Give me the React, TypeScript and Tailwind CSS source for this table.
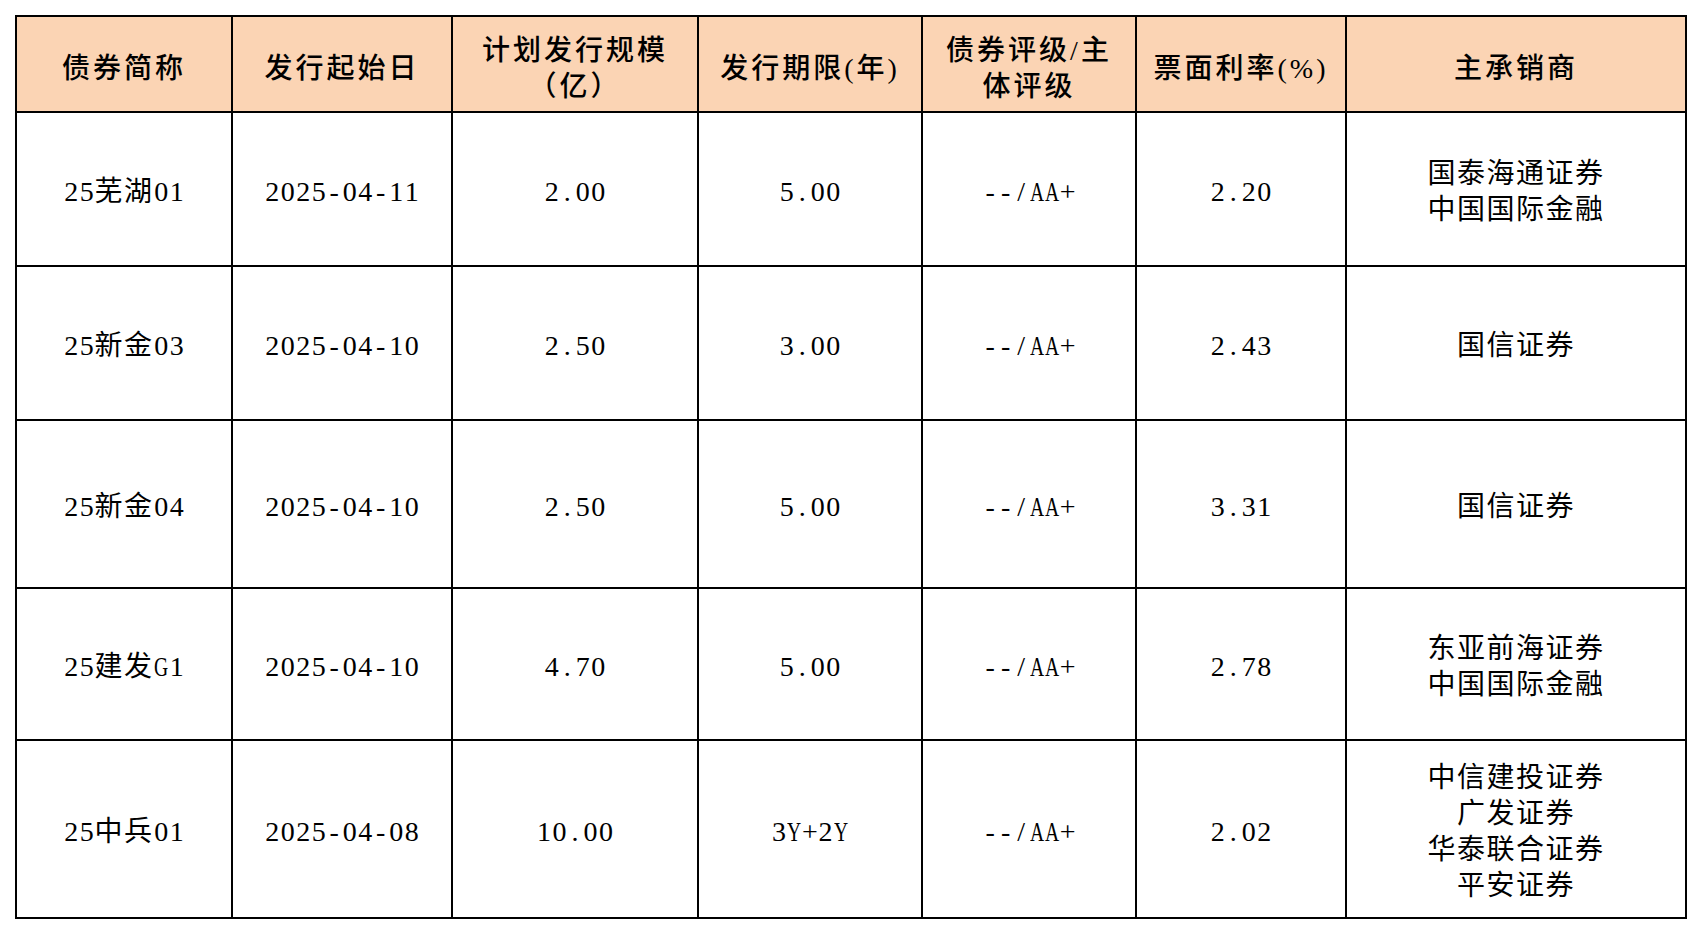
import React from 'react';

type Bond = {
  name: string;
  date: string;
  size: string;
  term: string;
  rating: string;
  coupon: string;
  underwriters: string[];
  height: string;
};

const bonds: Bond[] = [
  { name: '25芜湖01', date: '2025-04-11', size: '2.00', term: '5.00', rating: '--/AA+', coupon: '2.20', underwriters: ['国泰海通证券', '中国国际金融'], height: 'h-[154px]' },
  { name: '25新金03', date: '2025-04-10', size: '2.50', term: '3.00', rating: '--/AA+', coupon: '2.43', underwriters: ['国信证券'], height: 'h-[154px]' },
  { name: '25新金04', date: '2025-04-10', size: '2.50', term: '5.00', rating: '--/AA+', coupon: '3.31', underwriters: ['国信证券'], height: 'h-[168px]' },
  { name: '25建发G1', date: '2025-04-10', size: '4.70', term: '5.00', rating: '--/AA+', coupon: '2.78', underwriters: ['东亚前海证券', '中国国际金融'], height: 'h-[152px]' },
  { name: '25中兵01', date: '2025-04-08', size: '10.00', term: '3Y+2Y', rating: '--/AA+', coupon: '2.02', underwriters: ['中信建投证券', '广发证券', '华泰联合证券', '平安证券'], height: 'h-[178px]' },
];

const th = 'border-2 border-black bg-[#fbd4b4] text-center align-middle font-medium tracking-[3px] leading-[36px] whitespace-nowrap p-0 pt-[9px]';
const td = 'border-2 border-black text-center align-middle leading-[36px] whitespace-nowrap p-0 pt-[6px]';

// half-width chars get a fixed cell so they line up like the original's mono font;
// capitals are squeezed to fit that cell
const Cell: React.FC<{ text: string }> = ({ text }) => (
  <>
    {Array.from(text).map((ch, i) =>
      ch.charCodeAt(0) < 128 ? (
        <span key={i} className="inline-flex w-[15.5px] justify-center">
          {/[A-Z]/.test(ch) ? <span className="inline-block scale-x-[0.7]">{ch}</span> : ch}
        </span>
      ) : (
        <span key={i} className="tracking-[1.5px]">
          {ch}
        </span>
      )
    )}
  </>
);

const App: React.FC = () => {
  return (
    <div className="min-h-[934px] w-[1702px] bg-white pl-[15px] pt-[15px] text-black text-[28px] font-['Liberation_Serif','Noto_Sans_CJK_SC',serif]">
      <table className="w-[1672px] table-fixed border-collapse">
        <colgroup>
          <col className="w-[216px]" />
          <col className="w-[220px]" />
          <col className="w-[246px]" />
          <col className="w-[224px]" />
          <col className="w-[214px]" />
          <col className="w-[210px]" />
          <col className="w-[340px]" />
        </colgroup>
        <thead>
          <tr className="h-[96px]">
            <th className={th}>债券简称</th>
            <th className={th}>发行起始日</th>
            <th className={th}>
              计划发行规模
              <br />
              （亿）
            </th>
            <th className={th}>发行期限(年)</th>
            <th className={th}>
              债券评级/主
              <br />
              体评级
            </th>
            <th className={th}>票面利率(%)</th>
            <th className={th}>主承销商</th>
          </tr>
        </thead>
        <tbody>
          {bonds.map((b) => (
            <tr key={b.name} className={b.height}>
              <td className={td}><Cell text={b.name} /></td>
              <td className={td}><Cell text={b.date} /></td>
              <td className={td}><Cell text={b.size} /></td>
              <td className={td}><Cell text={b.term} /></td>
              <td className={td}><Cell text={b.rating} /></td>
              <td className={td}><Cell text={b.coupon} /></td>
              <td className={td}>
                {b.underwriters.map((u) => (
                  <div key={u} className="tracking-[1.5px]">{u}</div>
                ))}
              </td>
            </tr>
          ))}
        </tbody>
      </table>
    </div>
  );
};

export default App;
